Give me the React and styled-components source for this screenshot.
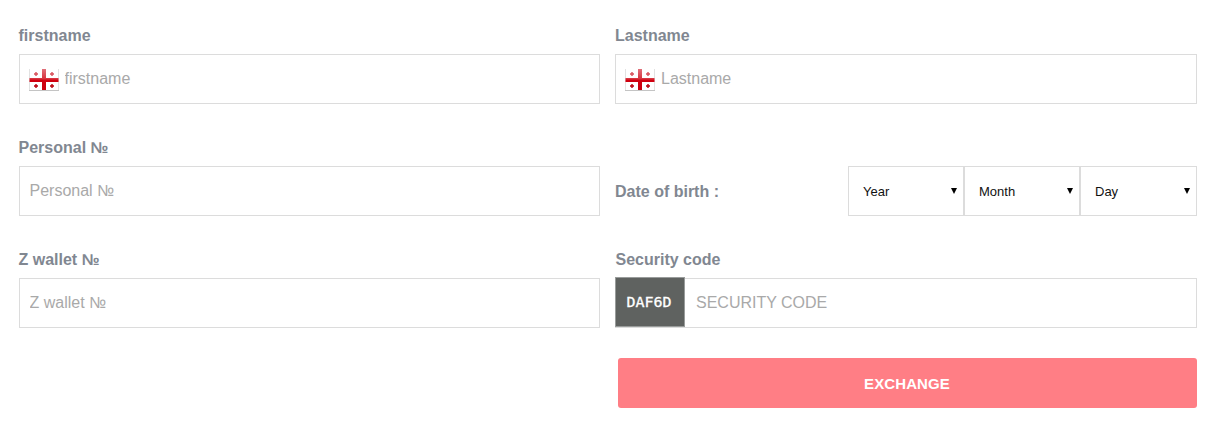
import styled, { createGlobalStyle } from 'styled-components';

const GlobalStyle = createGlobalStyle`
    * {
        box-sizing: border-box;
    }
    body {
        margin: 0;
        background: #fff;
        font-family: "Liberation Sans", Arial, sans-serif;
    }
`;

const Form = styled.form`
    display: grid;
    grid-template-columns: 581px 582px;
    column-gap: 15px;
    row-gap: 30px;
    padding: 22px 9px 16px 19px;
`;

const Field = styled.div`
    display: flex;
    flex-direction: column;
`;

const Label = styled.label`
    height: 32px;
    padding-left: ${({ $indent }) => $indent || 0}px;
    margin-left: -0.5px;
    font-size: 16px;
    font-weight: bold;
    line-height: 28px;
    color: #818791;
`;

const InputBox = styled.div`
    display: flex;
    align-items: center;
    height: 50px;
    padding-left: ${({ $flush }) => ($flush ? 0 : 9)}px;
    border: 1px solid #dcdcdc;
`;

const Input = styled.input`
    flex: 1;
    min-width: 0;
    height: 46px;
    margin: 0;
    padding: 0 0 0 ${({ $gap }) => $gap || 0.5}px;
    border: 0;
    outline: 0;
    background: transparent;
    font-family: inherit;
    font-size: 16px;
    color: #555;

    &::placeholder {
        color: #a9a9a9;
        opacity: 1;
    }
`;

const FlagIcon = styled.svg`
    width: 30px;
    height: 23px;
    flex: none;
    margin-top: 2px;
`;

const BirthRow = styled.div`
    display: flex;
    align-items: center;
    justify-content: space-between;
    height: 50px;
    margin-top: 32px;
`;

const BirthLabel = styled.span`
    padding-top: 2px;
    font-size: 16px;
    font-weight: bold;
    color: #818791;
`;

const Selects = styled.div`
    display: flex;
`;

const Select = styled.button`
    display: flex;
    align-items: center;
    justify-content: space-between;
    width: ${({ $width }) => $width}px;
    height: 50px;
    padding: 0 6px 0 14px;
    border: 1px solid #dcdcdc;
    background: #fff;
    font-family: inherit;
    font-size: 13px;
    color: #111;
`;

const Arrow = styled.svg`
    width: 6px;
    height: 6px;
`;

const Captcha = styled.div`
    display: flex;
    align-items: center;
    justify-content: center;
    flex: none;
    width: 70px;
    height: 50px;
    margin: -2px 0 0 -1px;
    padding: 2px 2px 0 0;
    border: 1px solid #999c9b;
    background: #5f6260;
    color: #fff;
`;

const CaptchaCode = styled.span`
    font-family: "DejaVu Sans Mono", monospace;
    font-size: 15px;
    line-height: 18px;
    -webkit-text-stroke: 0.3px #fff;
    transform: scaleY(0.9);
`;

const SubmitButton = styled.button`
    grid-column: 2;
    height: 50px;
    margin-left: 3px;
    padding: 0 1px 0 0;
    border: 0;
    border-radius: 3px;
    background: #ff7e85;
    font-family: inherit;
    font-size: 15px;
    font-weight: bold;
    letter-spacing: 0.1px;
    color: #fff;
`;

const crosses = [[7, 5], [23, 5], [7, 17], [23, 17]];

const GeorgianFlag = () => (
    <FlagIcon viewBox="0 0 30 23">
        <defs>
            <linearGradient id="red" x1="0" y1="0" x2="0" y2="23" gradientUnits="userSpaceOnUse">
                <stop offset="0" stopColor="#e0707a" />
                <stop offset="0.42" stopColor="#d8343f" />
                <stop offset="0.5" stopColor="#d0000f" />
                <stop offset="1" stopColor="#c8000d" />
            </linearGradient>
        </defs>
        <rect width="30" height="22" fill="#c4c4c4" />
        <rect x="0.5" y="0" width="29" height="21" fill="#fff" />
        <path d="M13 0h4v21h-4z M0.5 9h29v4h-29z" fill="url(#red)" />
        {crosses.map(([x, y]) => (
            <path
                key={`${x}-${y}`}
                d={`M${x - 2} ${y - 0.7}h4v1.4h-4z M${x - 0.7} ${y - 2}h1.4v4h-1.4z`}
                fill={y < 10 ? '#d8505a' : '#b8000c'}
            />
        ))}
    </FlagIcon>
);

const dates = [
    { name: 'Year', width: 116 },
    { name: 'Month', width: 116 },
    { name: 'Day', width: 117 },
];

const App = () => {
    return (
        <>
            <GlobalStyle />
            <Form>
                <Field>
                    <Label>firstname</Label>
                    <InputBox>
                        <GeorgianFlag />
                        <Input $gap={5.5} placeholder="firstname" />
                    </InputBox>
                </Field>
                <Field>
                    <Label $indent={0.5}>Lastname</Label>
                    <InputBox>
                        <GeorgianFlag />
                        <Input $gap={6} placeholder="Lastname" />
                    </InputBox>
                </Field>
                <Field>
                    <Label>Personal №</Label>
                    <InputBox>
                        <Input placeholder="Personal №" />
                    </InputBox>
                </Field>
                <BirthRow>
                    <BirthLabel>Date of birth :</BirthLabel>
                    <Selects>
                        {dates.map(({ name, width }) => (
                            <Select key={name} type="button" $width={width}>
                                {name}
                                <Arrow viewBox="0 0 6 6">
                                    <path d="M0 0h6L3 6z" fill="#000" />
                                </Arrow>
                            </Select>
                        ))}
                    </Selects>
                </BirthRow>
                <Field>
                    <Label>Z wallet №</Label>
                    <InputBox>
                        <Input placeholder="Z wallet №" />
                    </InputBox>
                </Field>
                <Field>
                    <Label $indent={1}>Security code</Label>
                    <InputBox $flush>
                        <Captcha>
                            <CaptchaCode>DAF6D</CaptchaCode>
                        </Captcha>
                        <Input $gap={11} placeholder="SECURITY CODE" />
                    </InputBox>
                </Field>
                <SubmitButton type="button">EXCHANGE</SubmitButton>
            </Form>
        </>
    );
}

export default App;
